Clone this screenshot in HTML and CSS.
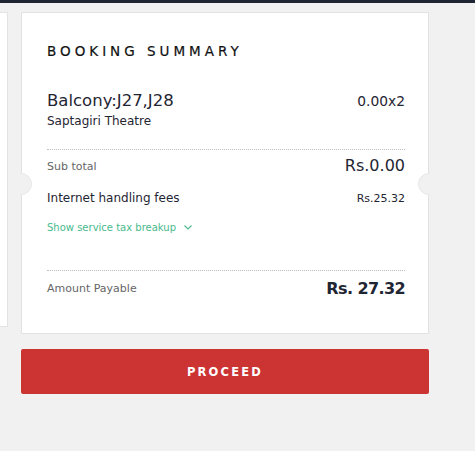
FILE: index.html
```html
<!DOCTYPE html>
<html lang="en">
<head>
<meta charset="utf-8">
<title>Booking Summary</title>
<link rel="stylesheet" href="styles.css">
</head>
<body>
<div class="topbar"></div>
<div class="page">
  <aside class="side"></aside>
  <main class="main">
    <section class="card">
      <span class="notch notch-left"></span>
      <span class="notch notch-right"></span>
      <h2 class="title">BOOKING SUMMARY</h2>
      <div class="row item">
        <div class="item-info">
          <div class="seats">Balcony:J27,J28</div>
          <div class="theatre">Saptagiri Theatre</div>
        </div>
        <div class="unit-price">0.00x2</div>
      </div>
      <div class="sep sep-first"></div>
      <div class="row subtotal">
        <span class="label-muted">Sub total</span>
        <span class="subtotal-value">Rs.0.00</span>
      </div>
      <div class="row fees">
        <span class="fees-label">Internet handling fees</span>
        <span class="fees-value">Rs.25.32</span>
      </div>
      <a class="tax-link" href="#">Show service tax breakup
        <svg class="chev" width="8" height="5" viewBox="0 0 8 5"><path d="M0.5 0.5 L4 4 L7.5 0.5" fill="none" stroke="currentColor" stroke-width="1.1"/></svg>
      </a>
      <div class="sep sep-total"></div>
      <div class="row total">
        <span class="label-muted">Amount Payable</span>
        <span class="total-value">Rs. 27.32</span>
      </div>
    </section>
    <button class="proceed" type="button">PROCEED</button>
  </main>
</div>
</body>
</html>
```

FILE: styles.css
```css
* { box-sizing: border-box; }

html, body {
  margin: 0;
  padding: 0;
  background: #f1f1f1;
  font-family: "DejaVu Sans", "Open Sans", sans-serif;
  color: #1f2533;
}

.topbar {
  height: 3px;
  background: #1f2533;
}

.page {
  display: flex;
  align-items: flex-start;
  gap: 13px;
  padding-top: 9px;
}

.side {
  width: 8px;
  height: 315px;
  background: #fff;
  border: 1px solid #e3e3e3;
  border-left: none;
}

.main {
  width: 408px;
  display: flex;
  flex-direction: column;
  gap: 15px;
}

.card {
  position: relative;
  height: 322px;
  background: #fff;
  border: 1px solid #e2e2e2;
  padding: 30px 23px 0 25px;
}

.notch {
  position: absolute;
  top: 160px;
  width: 22px;
  height: 22px;
  border-radius: 50%;
  background: #f1f1f1;
  border: 1px solid #e6e6e6;
}
.notch-left { left: -12px; clip-path: inset(0 0 0 11px); }
.notch-right { right: -12px; clip-path: inset(0 11px 0 0); }

.title {
  margin: 0;
  font-size: 13.5px;
  line-height: 16px;
  font-weight: 400;
  letter-spacing: 4px;
  color: #111;
  -webkit-text-stroke: 0.2px #111;
}

.row {
  display: flex;
  justify-content: space-between;
  align-items: center;
}

.item {
  margin-top: 32px;
  align-items: flex-start;
}

.seats {
  font-size: 16.5px;
  line-height: 20px;
}

.theatre {
  margin-top: 2px;
  font-size: 12px;
  line-height: 16px;
}

.unit-price {
  font-size: 13.8px;
  line-height: 20px;
}

.sep {
  border-top: 1px dotted #bdbdbd;
}
.sep-first { margin-top: 20px; }
.sep-total { margin-top: 35px; }

.subtotal { margin-top: 6px; height: 20px; }
.label-muted {
  font-size: 11px;
  color: #666;
}
.subtotal-value {
  font-size: 16px;
  line-height: 20px;
}

.fees { margin-top: 12px; height: 20px; }
.fees-label { font-size: 12px; }
.fees-value { font-size: 11px; }

.tax-link {
  display: flex;
  align-items: center;
  gap: 8px;
  margin-top: 11px;
  height: 16px;
  font-size: 10px;
  color: #49ba8e;
  text-decoration: none;
}

.total { margin-top: 5px; height: 24px; }
.total-value {
  font-size: 16px;
  font-weight: 700;
  letter-spacing: -0.6px;
}

.proceed {
  height: 45px;
  border: none;
  border-radius: 2px;
  background: #cc3333;
  color: #fff;
  font-family: inherit;
  font-size: 11.5px;
  font-weight: 700;
  letter-spacing: 2.2px;
  padding: 0;
}
```
